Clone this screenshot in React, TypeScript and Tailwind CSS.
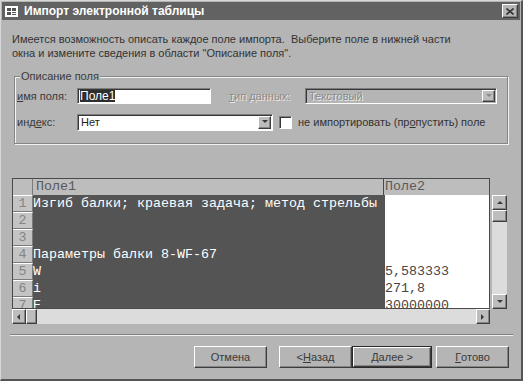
import React from 'react';

const ui = "font-['Liberation_Sans',Arial,sans-serif]";
const mono = "font-['Liberation_Mono','Courier_New',monospace]";

const raised =
  'border border-t-white border-l-white border-r-[#3c3c3c] border-b-[#3c3c3c] shadow-[inset_-1px_-1px_0_#858585]';
const sunken =
  'border border-t-[#7c7c7c] border-l-[#7c7c7c] border-r-white border-b-white shadow-[inset_1px_1px_0_#383838]';

const rows: [string, string][] = [
  ['Изгиб балки; краевая задача; метод стрельбы', ''],
  ['', ''],
  ['', ''],
  ['Параметры балки 8-WF-67', ''],
  ['W', '5,583333'],
  ['i', '271,8'],
  ['E', '30000000'],
];

const Arrow: React.FC<{ dir: 'up' | 'down' | 'left' | 'right'; disabled?: boolean }> = ({ dir, disabled }) => {
  const pts = {
    up: '1,5 4,2 7,5',
    down: '1,2 4,5 7,2',
    left: '5,1 2,4 5,7',
    right: '2,1 5,4 2,7',
  }[dir];
  return (
    <svg width="8" height="8" viewBox="0 0 8 8">
      <polygon points={pts} fill={disabled ? '#8a8a8a' : '#3a3a3a'} />
    </svg>
  );
};

const ScrollBtn: React.FC<{ dir: 'up' | 'down' | 'left' | 'right'; className?: string }> = ({ dir, className }) => (
  <div className={`bg-[#bdbdbd] ${raised} flex items-center justify-center shrink-0 ${className ?? ''}`}>
    <Arrow dir={dir} />
  </div>
);

const Button: React.FC<{ children: React.ReactNode; className?: string; isDefault?: boolean }> = ({
  children,
  className,
  isDefault,
}) => (
  <div
    className={`h-[22px] flex items-center justify-center text-[11px] text-[#3a3a3a] bg-[#b5b5b5] ${
      isDefault ? 'border border-[#2a2a2a]' : ''
    } ${className ?? ''}`}
  >
    <div className={`w-full h-full flex items-center justify-center ${raised}`}>{children}</div>
  </div>
);

export default function App() {
  return (
    <div
      className={`${ui} w-[523px] h-[381px] bg-[#b5b5b5] border-t border-l border-t-[#d8d8d8] border-l-[#d8d8d8] border-r-2 border-b-2 border-r-[#555] border-b-[#555] p-[1px] flex flex-col overflow-hidden`}
    >
      {/* title bar */}
      <div className="h-[18px] bg-[#626262] flex items-center pl-[3px] pr-[2px] shrink-0">
        <svg width="13" height="11" viewBox="0 0 13 11" className="shrink-0">
          <rect x="0.5" y="0.5" width="12" height="10" fill="#fff" stroke="#fff" />
          <rect x="2" y="2" width="4" height="3" fill="#555" />
          <rect x="7" y="2" width="4" height="3" fill="#555" />
          <rect x="2" y="6" width="4" height="3" fill="#555" />
          <rect x="7" y="6" width="4" height="1" fill="#555" />
          <rect x="7" y="8" width="4" height="1" fill="#555" />
        </svg>
        <span className="ml-[6px] text-white font-bold text-[12px] leading-none">Импорт электронной таблицы</span>
        <div className={`ml-auto w-[16px] h-[14px] bg-[#b5b5b5] ${raised} flex items-center justify-center`}>
          <svg width="8" height="7" viewBox="0 0 8 7">
            <path d="M0.5 0.5 L7.5 6.5 M7.5 0.5 L0.5 6.5" stroke="#333" strokeWidth="1.6" />
          </svg>
        </div>
      </div>

      {/* body */}
      <div className="flex-1 flex flex-col pl-[10px]">
        <p className="mt-[12px] text-[11px] leading-[14px] text-[#333] whitespace-pre">
          {'Имеется возможность описать каждое поле импорта.  Выберите поле в нижней части\nокна и измените сведения в области "Описание поля".'}
        </p>

        {/* group box */}
        <div className="relative mt-[16px] ml-[2px] w-[494px] h-[68px] border border-[#858585] shadow-[1px_1px_0_#f2f2f2,inset_1px_1px_0_#f2f2f2] pl-[2px] pt-[11px] flex flex-col gap-[10px] text-[11px] text-[#3a3a3a]">
          <span className="absolute -top-[8px] left-[5px] bg-[#b5b5b5] px-[1px] leading-[14px]">Описание поля</span>
          <div className="flex items-center h-[16px]">
            <span className="w-[60px]">
              <u>и</u>мя поля:
            </span>
            <div className={`w-[134px] h-[16px] bg-white ${sunken} flex items-center pl-[2px]`}>
              <span className="bg-[#2e2e2e] text-white leading-[12px] text-[12px]">Поле1</span>
            </div>
            <span className="ml-[18px] w-[76px] text-[#8a8a8a] [text-shadow:1px_1px_0_#ececec]">
              <u>т</u>ип данных:
            </span>
            <div className={`w-[192px] h-[16px] bg-[#b5b5b5] ${sunken} flex items-center pl-[3px]`}>
              <span className="text-[#8a8a8a] [text-shadow:1px_1px_0_#ececec]">Текстовый</span>
              <div className={`ml-auto mr-[1px] w-[13px] h-[12px] bg-[#bdbdbd] ${raised} flex items-center justify-center`}>
                <Arrow dir="down" disabled />
              </div>
            </div>
          </div>
          <div className="flex items-center h-[16px]">
            <span className="w-[60px]">
              инд<u>е</u>кс:
            </span>
            <div className={`w-[196px] h-[17px] bg-white ${sunken} flex items-center pl-[3px]`}>
              <span className="text-[#222]">Нет</span>
              <div className={`ml-auto mr-[1px] w-[13px] h-[13px] bg-[#bdbdbd] ${raised} flex items-center justify-center`}>
                <Arrow dir="down" />
              </div>
            </div>
            <div className={`ml-[6px] w-[13px] h-[13px] bg-white ${sunken}`} />
            <span className="ml-[6px] text-[#333]">
              не импортировать (пр<u>о</u>пустить) поле
            </span>
          </div>
        </div>

        {/* preview grid */}
        <div className="mt-[34px] flex">
          <div className="w-[478px] flex flex-col">
            <div className={`${mono} h-[131px] border border-[#4a4a4a] bg-white overflow-hidden text-[13.33px] leading-[17px]`}>
              <div className="flex h-[16px] bg-[#bdbdbd] text-[#5a5a5a] leading-[16px]">
                <div className="w-[20px] border-r border-[#7a7a7a]" />
                <div className="w-[351px] pl-[3px] border-r border-[#4a4a4a]">Поле1</div>
                <div className="flex-1 pl-[1px]">Поле2</div>
              </div>
              {rows.map(([a, b], i) => (
                <div key={i} className="flex h-[17px]">
                  <div className="w-[20px] bg-[#c4c4c4] border-t border-t-white border-b border-b-[#7a7a7a] border-r border-r-[#7a7a7a] text-[#858585] text-center leading-[15px]">
                    {i + 1}
                  </div>
                  <div className="w-[352px] bg-[#545454] text-white whitespace-pre">{a}</div>
                  <div className="flex-1 text-[#454545] whitespace-pre">{b}</div>
                </div>
              ))}
            </div>
            <div className="h-[15px] flex bg-[#dcdcdc]">
              <ScrollBtn dir="left" className="w-[14px] h-[15px]" />
              <div className={`w-[11px] h-[15px] bg-[#bdbdbd] ${raised}`} />
              <div className="flex-1" />
              <ScrollBtn dir="right" className="w-[14px] h-[15px]" />
            </div>
          </div>
          <div className="ml-[2px] w-[15px] flex flex-col">
            <div className="h-[17px]" />
            <div className="h-[114px] bg-[#dcdcdc] flex flex-col">
              <ScrollBtn dir="up" className="h-[15px] w-[15px]" />
              <div className={`h-[12px] w-[15px] bg-[#bdbdbd] ${raised}`} />
              <div className="flex-1" />
              <ScrollBtn dir="down" className="h-[15px] w-[15px]" />
            </div>
          </div>
        </div>

        {/* separator */}
        <div className="mt-[10px] -ml-[2px] w-[503px] h-[2px] border-t border-t-[#808080] border-b border-b-[#f0f0f0]" />

        {/* buttons */}
        <div className="mt-[10px] flex">
          <Button className="ml-[182px] w-[73px]">Отмена</Button>
          <Button className="ml-[12px] w-[73px]">
            &lt;{' '}<u>Н</u>азад
          </Button>
          <Button className="w-[80px]" isDefault>
            <u>Д</u>алее &gt;
          </Button>
          <Button className="ml-[4px] w-[73px]">
            <u>Г</u>отово
          </Button>
        </div>
      </div>
    </div>
  );
}
